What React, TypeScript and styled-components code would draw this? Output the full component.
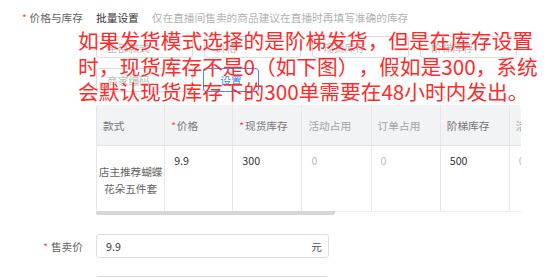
import React from 'react';
import styled, { createGlobalStyle } from 'styled-components';

const GlobalStyle = createGlobalStyle`
  body {
    margin: 0;
    background: #fff;
    font-family: "Noto Sans CJK SC", "Noto Sans", sans-serif;
  }
`;

const Page = styled.div`
  position: relative;
  width: 554px;
  height: 277px;
  overflow: hidden;
  padding-top: 8px;
  box-sizing: border-box;
  font-size: 10.7px;
  color: #555;
`;

const FieldRow = styled.div<{ $top?: number }>`
  display: flex;
  align-items: flex-start;
  margin-top: ${(p) => p.$top || 0}px;
`;

const Label = styled.div<{ $h?: number }>`
  width: 83px;
  margin-right: 13px;
  flex: none;
  display: flex;
  justify-content: flex-end;
  align-items: center;
  height: ${(p) => p.$h || 18}px;
  color: #666;
  white-space: nowrap;
`;

const Required = styled.span<{ $gap?: number }>`
  color: #f04848;
  margin-right: ${(p) => (p.$gap === undefined ? 3 : p.$gap)}px;
  font-size: 10px;
`;

const Content = styled.div`
  display: flex;
  flex-direction: column;
`;

const BatchHead = styled.div`
  display: flex;
  align-items: center;
  height: 18px;
  gap: 13px;
  white-space: nowrap;
`;

const BatchTitle = styled.span`
  color: #333;
`;

const Hint = styled.span`
  color: #b2b2b2;
`;

const BatchRow = styled.div<{ $top: number }>`
  display: flex;
  align-items: center;
  gap: 11px;
  margin-top: ${(p) => p.$top}px;
`;

const BatchInput = styled.div<{ $h?: number }>`
  width: 97px;
  height: ${(p) => p.$h || 22}px;
  box-sizing: border-box;
  border: 1px solid #dcdcdc;
  border-radius: 3px;
  padding-left: 10px;
  display: flex;
  align-items: center;
  color: #bbb;
`;

const SetButton = styled.div`
  width: 56px;
  height: 24px;
  margin-left: -1px;
  box-sizing: border-box;
  border: 1px solid #4a86f7;
  border-radius: 3px;
  color: #3a78f2;
  display: flex;
  align-items: center;
  justify-content: center;
`;

const TableWrap = styled.div`
  margin-top: 13px;
  width: 425px;
  overflow: hidden;
  border-left: 1px solid #e6e6e8;
  border-radius: 3px 3px 0 3px;
  box-sizing: border-box;
`;

const Table = styled.table`
  border-collapse: separate;
  border-spacing: 0;
  table-layout: fixed;
  width: 482px;
`;

const Th = styled.th<{ $dim?: boolean }>`
  height: 40px;
  padding: 0 6px;
  background: #f2f3f5;
  border-right: 1px solid #e6e6e8;
  border-bottom: 1px solid #e3e3e5;
  text-align: left;
  font-weight: normal;
  color: ${(p) => (p.$dim ? '#a4a4a4' : '#777')};
  white-space: nowrap;
  overflow: hidden;
`;

const Td = styled.td<{ $dim?: boolean }>`
  height: 59px;
  padding: 6px 9px 0;
  vertical-align: top;
  border-right: 1px solid #e6e6e8;
  line-height: 17px;
  color: ${(p) => (p.$dim ? '#bbb' : '#333')};
  overflow: hidden;
  white-space: nowrap;
`;

const NameTd = styled.td`
  height: 59px;
  padding: 2px 0 0;
  vertical-align: middle;
  text-align: center;
  border-right: 1px solid #e6e6e8;
  line-height: 17px;
  color: #666;
  white-space: nowrap;
  letter-spacing: -0.1px;
`;

const ScrollTrack = styled.div`
  width: 425px;
  height: 4px;
  border-top: 1px solid #ececee;
  box-sizing: border-box;
`;

const Thumb = styled.div`
  width: 239px;
  height: 4px;
  margin-top: -1px;
  background: #d6d7db;
  border-radius: 0 0 2px 2px;
`;

const PriceInput = styled.div`
  width: 233px;
  height: 24px;
  box-sizing: border-box;
  border: 1px solid #dedede;
  border-radius: 3px;
  padding: 0 6px 0 9px;
  display: flex;
  align-items: center;
  justify-content: space-between;
  color: #333;
`;

const Suffix = styled.span`
  color: #555;
`;

const Note = styled.div`
  position: absolute;
  left: 78px;
  top: 28px;
  font-size: 20.7px;
  line-height: 25.5px;
  color: #fd2c2c;
  white-space: nowrap;
  pointer-events: none;
  text-spacing-trim: space-all;
`;

const cols = [68, 68, 69, 69, 69, 69, 69];

const headers: { text: string; req?: boolean; dim?: boolean }[] = [
  { text: '款式' },
  { text: '价格', req: true },
  { text: '现货库存', req: true },
  { text: '活动占用', dim: true },
  { text: '订单占用', dim: true },
  { text: '阶梯库存' },
  { text: '活动占用', dim: true },
];

const cells: { text: string; dim?: boolean }[] = [
  { text: '9.9' },
  { text: '300' },
  { text: '0', dim: true },
  { text: '0', dim: true },
  { text: '500' },
  { text: '0', dim: true },
];

export default function App() {
  return (
    <Page>
      <GlobalStyle />
      <FieldRow>
        <Label>
          <Required>*</Required>价格与库存
        </Label>
        <Content>
          <BatchHead>
            <BatchTitle>批量设置</BatchTitle>
            <Hint>仅在直播间售卖的商品建议在直播时再填写准确的库存</Hint>
          </BatchHead>
          <BatchRow $top={10}>
            <BatchInput>全部款式</BatchInput>
            <BatchInput>价格</BatchInput>
            <BatchInput>现货库存</BatchInput>
            <BatchInput>阶梯库存</BatchInput>
          </BatchRow>
          <BatchRow $top={10}>
            <BatchInput $h={24}>商家编码</BatchInput>
            <SetButton>设置</SetButton>
          </BatchRow>
          <TableWrap>
            <Table>
              <colgroup>
                {cols.map((w, i) => (
                  <col key={i} style={{ width: w }} />
                ))}
              </colgroup>
              <thead>
                <tr>
                  {headers.map((h, i) => (
                    <Th key={i} $dim={h.dim}>
                      {h.req && <Required $gap={1}>*</Required>}
                      {h.text}
                    </Th>
                  ))}
                </tr>
              </thead>
              <tbody>
                <tr>
                  <NameTd>
                    店主推荐蝴蝶
                    <br />
                    花朵五件套
                  </NameTd>
                  {cells.map((c, i) => (
                    <Td key={i} $dim={c.dim}>
                      {c.text}
                    </Td>
                  ))}
                </tr>
              </tbody>
            </Table>
          </TableWrap>
          <ScrollTrack>
            <Thumb />
          </ScrollTrack>
        </Content>
      </FieldRow>
      <FieldRow $top={19}>
        <Label $h={24}>
          <Required>*</Required>售卖价
        </Label>
        <PriceInput>
          9.9<Suffix>元</Suffix>
        </PriceInput>
      </FieldRow>
      <FieldRow $top={18}>
        <Label $h={24} />
        <PriceInput />
      </FieldRow>
      <Note>
        如果发货模式选择的是阶梯发货，但是在库存设置
        <br />
        时，现货库存不是0（如下图），假如是300，系统
        <br />
        会默认现货库存下的300单需要在48小时内发出。
      </Note>
    </Page>
  );
}
